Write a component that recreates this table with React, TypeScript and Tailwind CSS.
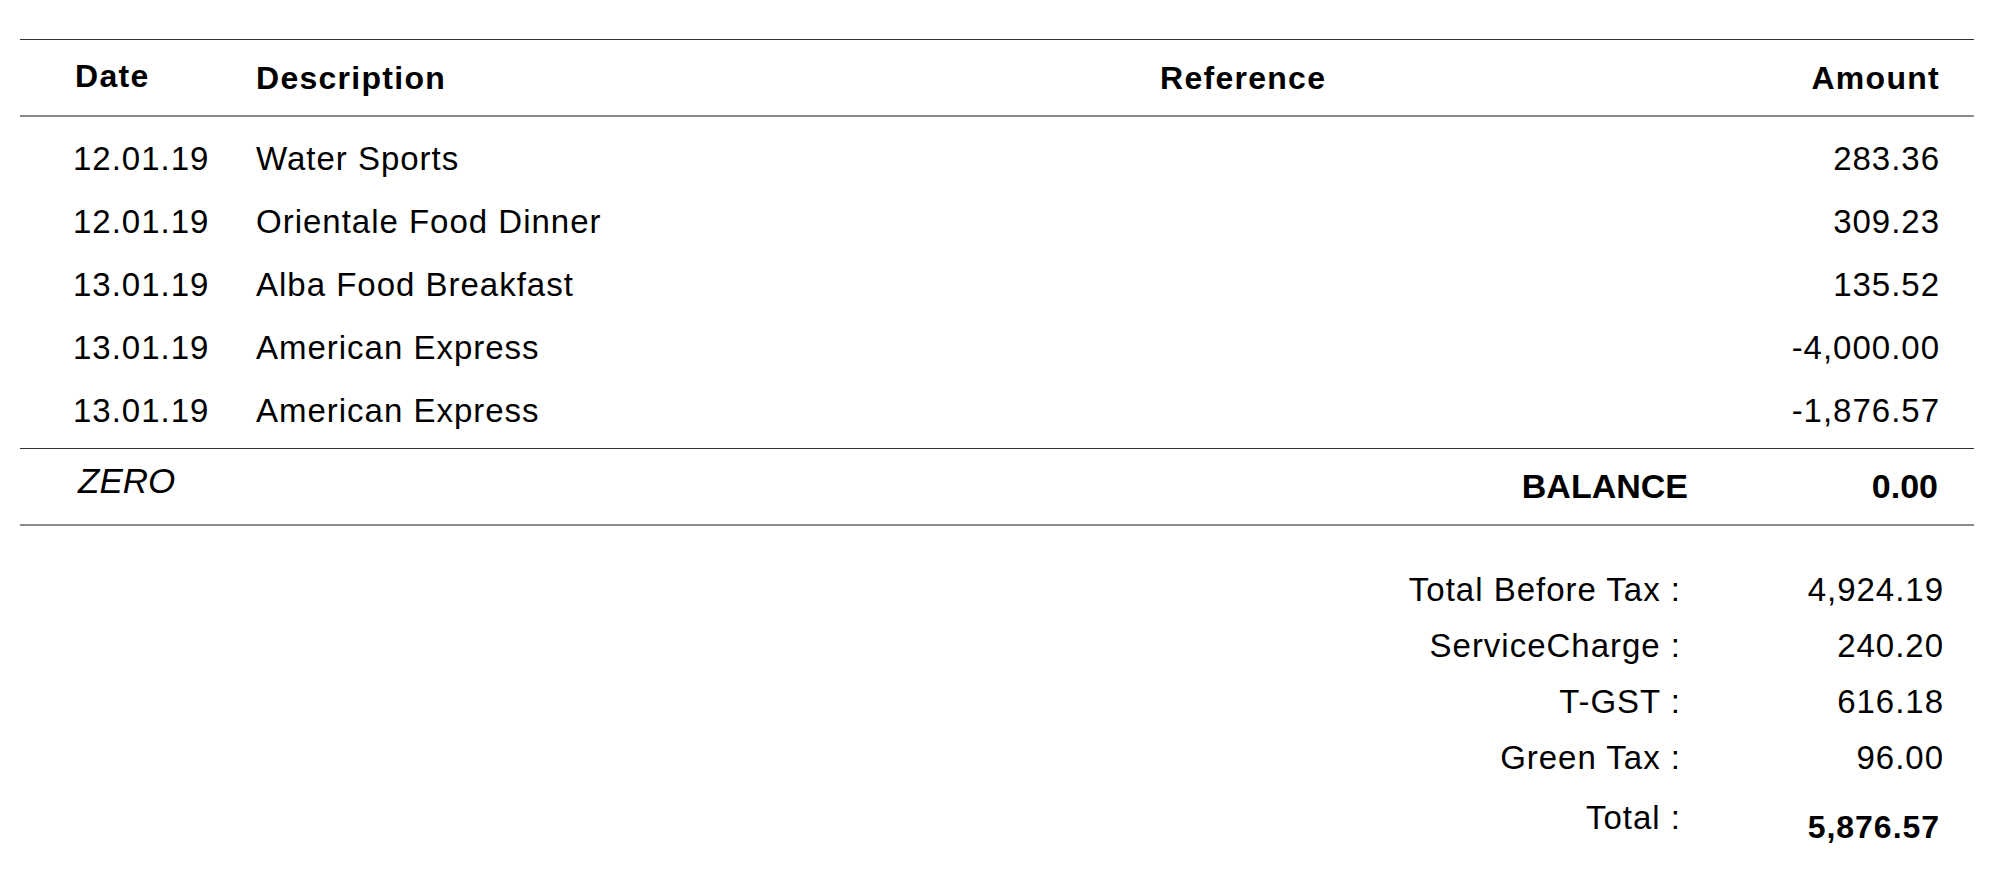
const rows = [
  { date: "12.01.19", desc: "Water Sports", amount: "283.36" },
  { date: "12.01.19", desc: "Orientale Food Dinner", amount: "309.23" },
  { date: "13.01.19", desc: "Alba Food Breakfast", amount: "135.52" },
  { date: "13.01.19", desc: "American Express", amount: "-4,000.00" },
  { date: "13.01.19", desc: "American Express", amount: "-1,876.57" },
]

const totals = [
  { label: "Total Before Tax :", value: "4,924.19" },
  { label: "ServiceCharge :", value: "240.20" },
  { label: "T-GST :", value: "616.18" },
  { label: "Green Tax :", value: "96.00" },
]

export default function App() {
  return (
    <div className="w-[1994px] h-[880px] bg-white text-black pt-[39px] px-5 font-['Liberation_Sans',Arial,sans-serif]">
      <div className="border-t border-[#333]">
        {/* header */}
        <div className="grid grid-cols-[181px_904px_1fr_auto] items-center h-[77px] pl-[55px] pr-[34px] border-b-2 border-[#8a8a8a] text-[32px] font-bold tracking-[0.04em]">
          <div className="-translate-y-[2px]">Date</div>
          <div>Description</div>
          <div>Reference</div>
          <div className="text-right">Amount</div>
        </div>

        {/* rows */}
        <div className="pt-[10px] pb-[6px] border-b border-[#333] text-[33px] tracking-[0.03em]">
          {rows.map((r, i) => (
            <div key={i} className="grid grid-cols-[181px_904px_1fr_auto] items-center h-[63px] pl-[55px] pr-[34px]">
              <div className="-ml-[2px]">{r.date}</div>
              <div>{r.desc}</div>
              <div />
              <div className="text-right">{r.amount}</div>
            </div>
          ))}
        </div>

        {/* balance */}
        <div className="flex items-center h-[77px] pl-[58px] pr-[36px] border-b-2 border-[#8a8a8a] text-[35px]">
          <div className="italic mb-[10px]">ZERO</div>
          <div className="flex-1" />
          <div className="font-bold text-[34px]">BALANCE</div>
          <div className="w-[250px] text-right font-bold text-[34px]">0.00</div>
        </div>

        {/* totals */}
        <div className="mt-[36px] pr-[30px] text-[33px] tracking-[0.03em]">
          {totals.map((t) => (
            <div key={t.label} className="flex justify-end items-center h-[56px] leading-[40px]">
              <div className="text-right">{t.label}</div>
              <div className="w-[263px] text-right">{t.value}</div>
            </div>
          ))}
          <div className="flex justify-end items-start h-[60px] leading-[40px]">
            <div className="text-right pt-[12px]">Total :</div>
            <div className="w-[263px] text-right pt-[21px] pr-[4px] font-bold text-[32px] tracking-[0.03em]">5,876.57</div>
          </div>
        </div>
      </div>
    </div>
  )
}
